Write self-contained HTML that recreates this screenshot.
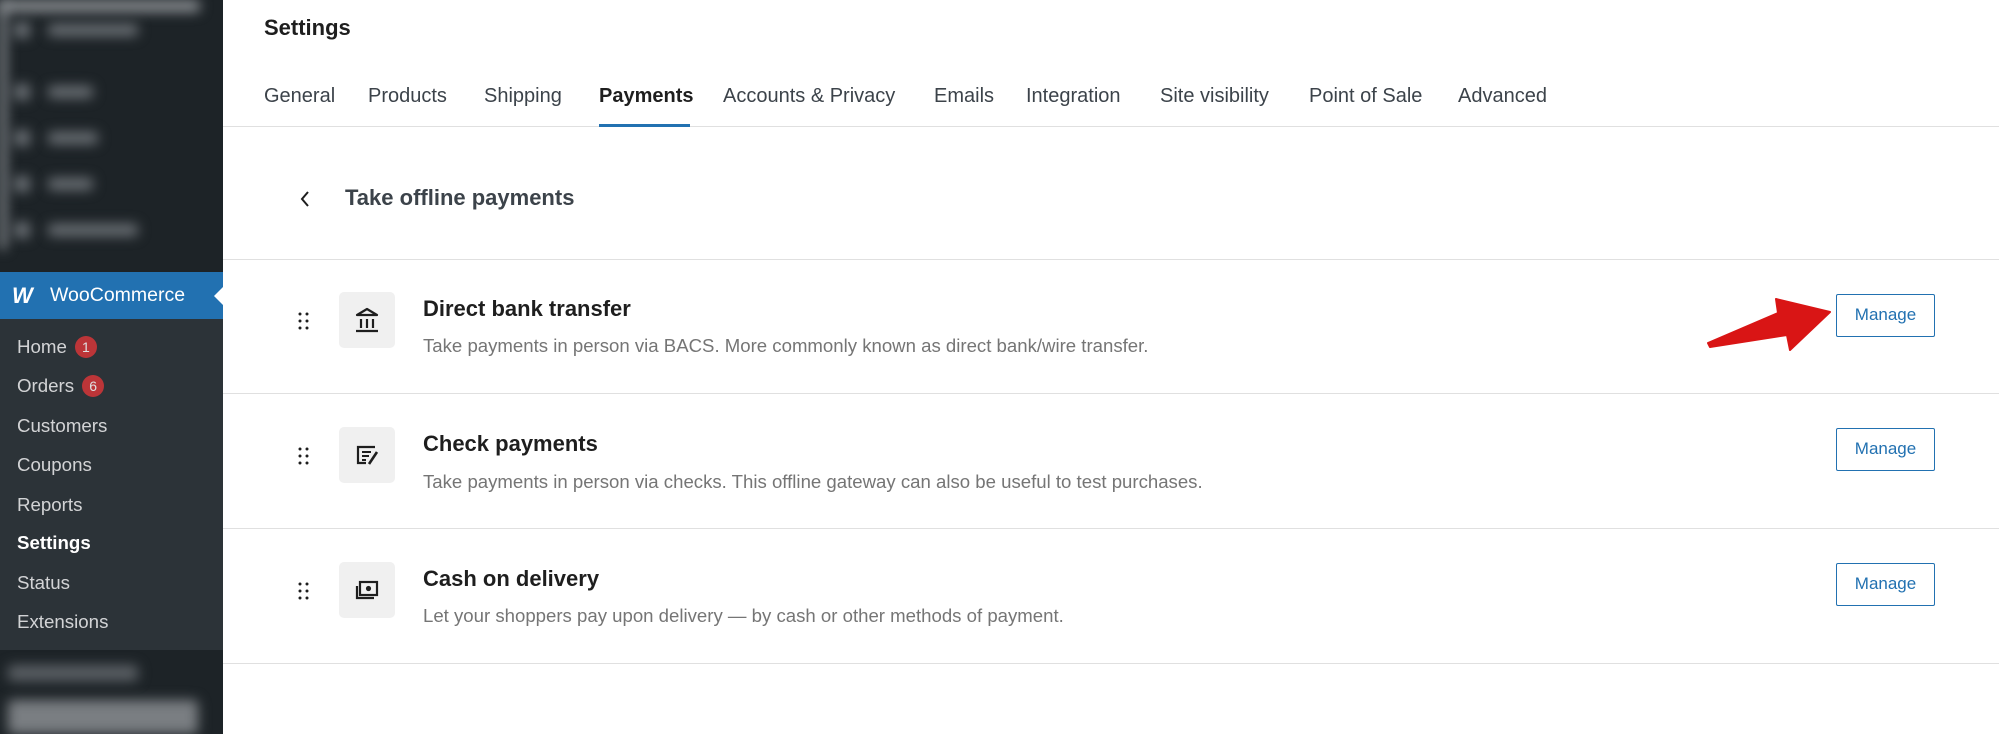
<!DOCTYPE html>
<html><head><meta charset="utf-8"><style>
*{margin:0;padding:0;box-sizing:border-box}
body{width:1999px;height:734px;overflow:hidden;background:#fff;font-family:"Liberation Sans",sans-serif;position:relative;color:#1e1e1e}
.sb{position:absolute;left:0;top:0;width:223px;height:734px;background:#1d2327;overflow:hidden}
.blur{position:absolute;background:#6b7075;filter:blur(6px);border-radius:4px}
.woo{position:absolute;left:0;top:272px;width:223px;height:47px;background:#2271b1;color:#fff;font-size:19.5px;line-height:47px;padding-left:50px}
.woo:after{content:"";position:absolute;right:0;top:15px;border:9px solid transparent;border-right-color:#fff}
.sub{position:absolute;left:0;top:319px;width:223px;height:331px;background:#2c3338}
.it{position:absolute;left:17px;font-size:18.7px;color:#f0f0f1;opacity:.85;line-height:24px}
.badge{display:inline-block;background:#d63638;color:#fff;font-size:14px;width:22px;height:22px;border-radius:11px;text-align:center;line-height:22px;margin-left:8px;vertical-align:1px}
.t{position:absolute;font-size:20px;color:#3c434a;line-height:24px}
.abs{position:absolute}
.line{position:absolute;left:223px;right:0;height:1px;background:#e0e0e0}
.ib{position:absolute;left:339px;width:56px;height:56px;background:#f0f0f0;border-radius:5px}
.ttl{position:absolute;left:423px;font-size:22px;font-weight:bold;color:#1e1e1e;line-height:26px}
.dsc{position:absolute;left:423px;font-size:18.6px;color:#757575;line-height:22px}
.btn{position:absolute;left:1836px;width:99px;height:43px;border:1.5px solid #2271b1;border-radius:2px;color:#2271b1;font-size:17px;text-align:center;line-height:40px}
.dots{position:absolute;left:298px;width:12px;height:18px}
</style></head><body>
<div class="sb">
<div class="blur" style="left:0;top:0;width:200px;height:12px;background:#8a8e92"></div>
<div class="blur" style="left:14px;top:22px;width:16px;height:16px"></div><div class="blur" style="left:48px;top:24px;width:90px;height:12px"></div>
<div class="blur" style="left:14px;top:84px;width:16px;height:16px"></div><div class="blur" style="left:48px;top:86px;width:45px;height:12px"></div>
<div class="blur" style="left:14px;top:130px;width:16px;height:16px"></div><div class="blur" style="left:48px;top:132px;width:50px;height:12px"></div>
<div class="blur" style="left:14px;top:176px;width:16px;height:16px"></div><div class="blur" style="left:48px;top:178px;width:45px;height:12px"></div>
<div class="blur" style="left:14px;top:222px;width:16px;height:16px"></div><div class="blur" style="left:48px;top:224px;width:90px;height:12px"></div>
<div class="blur" style="left:0;top:0;width:6px;height:250px;background:#9a9ea2"></div>
<div class="woo"><span style="position:absolute;left:12px;font-weight:bold;font-style:italic;font-size:22px">W</span>WooCommerce</div>
<div class="sub"></div>
<div class="it" style="top:335px">Home<span class="badge">1</span></div>
<div class="it" style="top:374px">Orders<span class="badge">6</span></div>
<div class="it" style="top:414px">Customers</div>
<div class="it" style="top:453px">Coupons</div>
<div class="it" style="top:493px">Reports</div>
<div class="it" style="top:531px;font-weight:bold;opacity:1;color:#fff">Settings</div>
<div class="it" style="top:571px">Status</div>
<div class="it" style="top:610px">Extensions</div>
<div class="blur" style="left:8px;top:665px;width:130px;height:16px;background:#5a5f64"></div>
<div class="blur" style="left:8px;top:700px;width:190px;height:34px;background:#7a7e82"></div>
</div>

<div class="abs" style="left:264px;top:15px;font-size:22px;font-weight:bold;line-height:26px">Settings</div>
<div class="t" style="left:264px;top:84px">General</div>
<div class="t" style="left:368px;top:84px">Products</div>
<div class="t" style="left:484px;top:84px">Shipping</div>
<div class="t" style="left:599px;top:84px;color:#1e1e1e;font-weight:bold">Payments</div>
<div class="t" style="left:723px;top:84px">Accounts &amp; Privacy</div>
<div class="t" style="left:934px;top:84px">Emails</div>
<div class="t" style="left:1026px;top:84px">Integration</div>
<div class="t" style="left:1160px;top:84px">Site visibility</div>
<div class="t" style="left:1309px;top:84px">Point of Sale</div>
<div class="t" style="left:1458px;top:84px">Advanced</div>
<div class="line" style="top:126px"></div>
<div class="abs" style="left:599px;top:124px;width:91px;height:3px;background:#2271b1"></div>

<svg class="abs" style="left:298px;top:189px" width="14" height="20" viewBox="0 0 14 20"><path d="M10 3 L4 10 L10 17" fill="none" stroke="#1e1e1e" stroke-width="2"/></svg>
<div class="abs" style="left:345px;top:185px;font-size:22px;font-weight:bold;color:#3c434a;line-height:26px">Take offline payments</div>
<div class="line" style="top:259px"></div>
<div class="line" style="top:393px"></div>
<div class="line" style="top:528px"></div>
<div class="line" style="top:663px"></div>

<svg class="dots" style="top:312px" viewBox="0 0 12 18"><g fill="#1e1e1e"><circle cx="2" cy="2" r="1.5"/><circle cx="9" cy="2" r="1.5"/><circle cx="2" cy="9" r="1.5"/><circle cx="9" cy="9" r="1.5"/><circle cx="2" cy="16" r="1.5"/><circle cx="9" cy="16" r="1.5"/></g></svg>
<svg class="dots" style="top:447px" viewBox="0 0 12 18"><g fill="#1e1e1e"><circle cx="2" cy="2" r="1.5"/><circle cx="9" cy="2" r="1.5"/><circle cx="2" cy="9" r="1.5"/><circle cx="9" cy="9" r="1.5"/><circle cx="2" cy="16" r="1.5"/><circle cx="9" cy="16" r="1.5"/></g></svg>
<svg class="dots" style="top:582px" viewBox="0 0 12 18"><g fill="#1e1e1e"><circle cx="2" cy="2" r="1.5"/><circle cx="9" cy="2" r="1.5"/><circle cx="2" cy="9" r="1.5"/><circle cx="9" cy="9" r="1.5"/><circle cx="2" cy="16" r="1.5"/><circle cx="9" cy="16" r="1.5"/></g></svg>

<div class="ib" style="top:292px"><svg width="56" height="56" viewBox="0 0 56 56"><path d="M18 23 L28 17 L38 23 Z" fill="none" stroke="#1e1e1e" stroke-width="2.2" stroke-linejoin="round"/><path d="M22 27v9M28 27v9M34 27v9M17 39h22" stroke="#1e1e1e" stroke-width="2.2"/></svg></div>
<div class="ib" style="top:427px"><svg width="56" height="56" viewBox="0 0 56 56"><path d="M36 20H19v16h8" fill="none" stroke="#1e1e1e" stroke-width="2.2"/><path d="M23 25h9M23 29h7M23 33h4" stroke="#1e1e1e" stroke-width="2"/><path d="M38 25 L30 37" stroke="#1e1e1e" stroke-width="2.6"/></svg></div>
<div class="ib" style="top:562px"><svg width="56" height="56" viewBox="0 0 56 56"><rect x="21" y="20" width="17" height="13" fill="none" stroke="#1e1e1e" stroke-width="2.2"/><circle cx="29.5" cy="26.5" r="2.6" fill="#1e1e1e"/><path d="M18 24v12h17" fill="none" stroke="#1e1e1e" stroke-width="2.2"/></svg></div>

<div class="ttl" style="top:296px">Direct bank transfer</div>
<div class="dsc" style="top:335px">Take payments in person via BACS. More commonly known as direct bank/wire transfer.</div>
<div class="ttl" style="top:431px">Check payments</div>
<div class="dsc" style="top:471px">Take payments in person via checks. This offline gateway can also be useful to test purchases.</div>
<div class="ttl" style="top:566px">Cash on delivery</div>
<div class="dsc" style="top:605px">Let your shoppers pay upon delivery — by cash or other methods of payment.</div>

<div class="btn" style="top:294px">Manage</div>
<div class="btn" style="top:428px">Manage</div>
<div class="btn" style="top:563px">Manage</div>

<svg class="abs" style="left:0;top:0" width="1999" height="734"><path d="M1708 343 L1778 313 L1776 299 L1830 312 L1790 350 L1787 335 L1710 347 Z" fill="#d91515" stroke="#d91515" stroke-width="2" stroke-linejoin="round"/></svg>
</body></html>
